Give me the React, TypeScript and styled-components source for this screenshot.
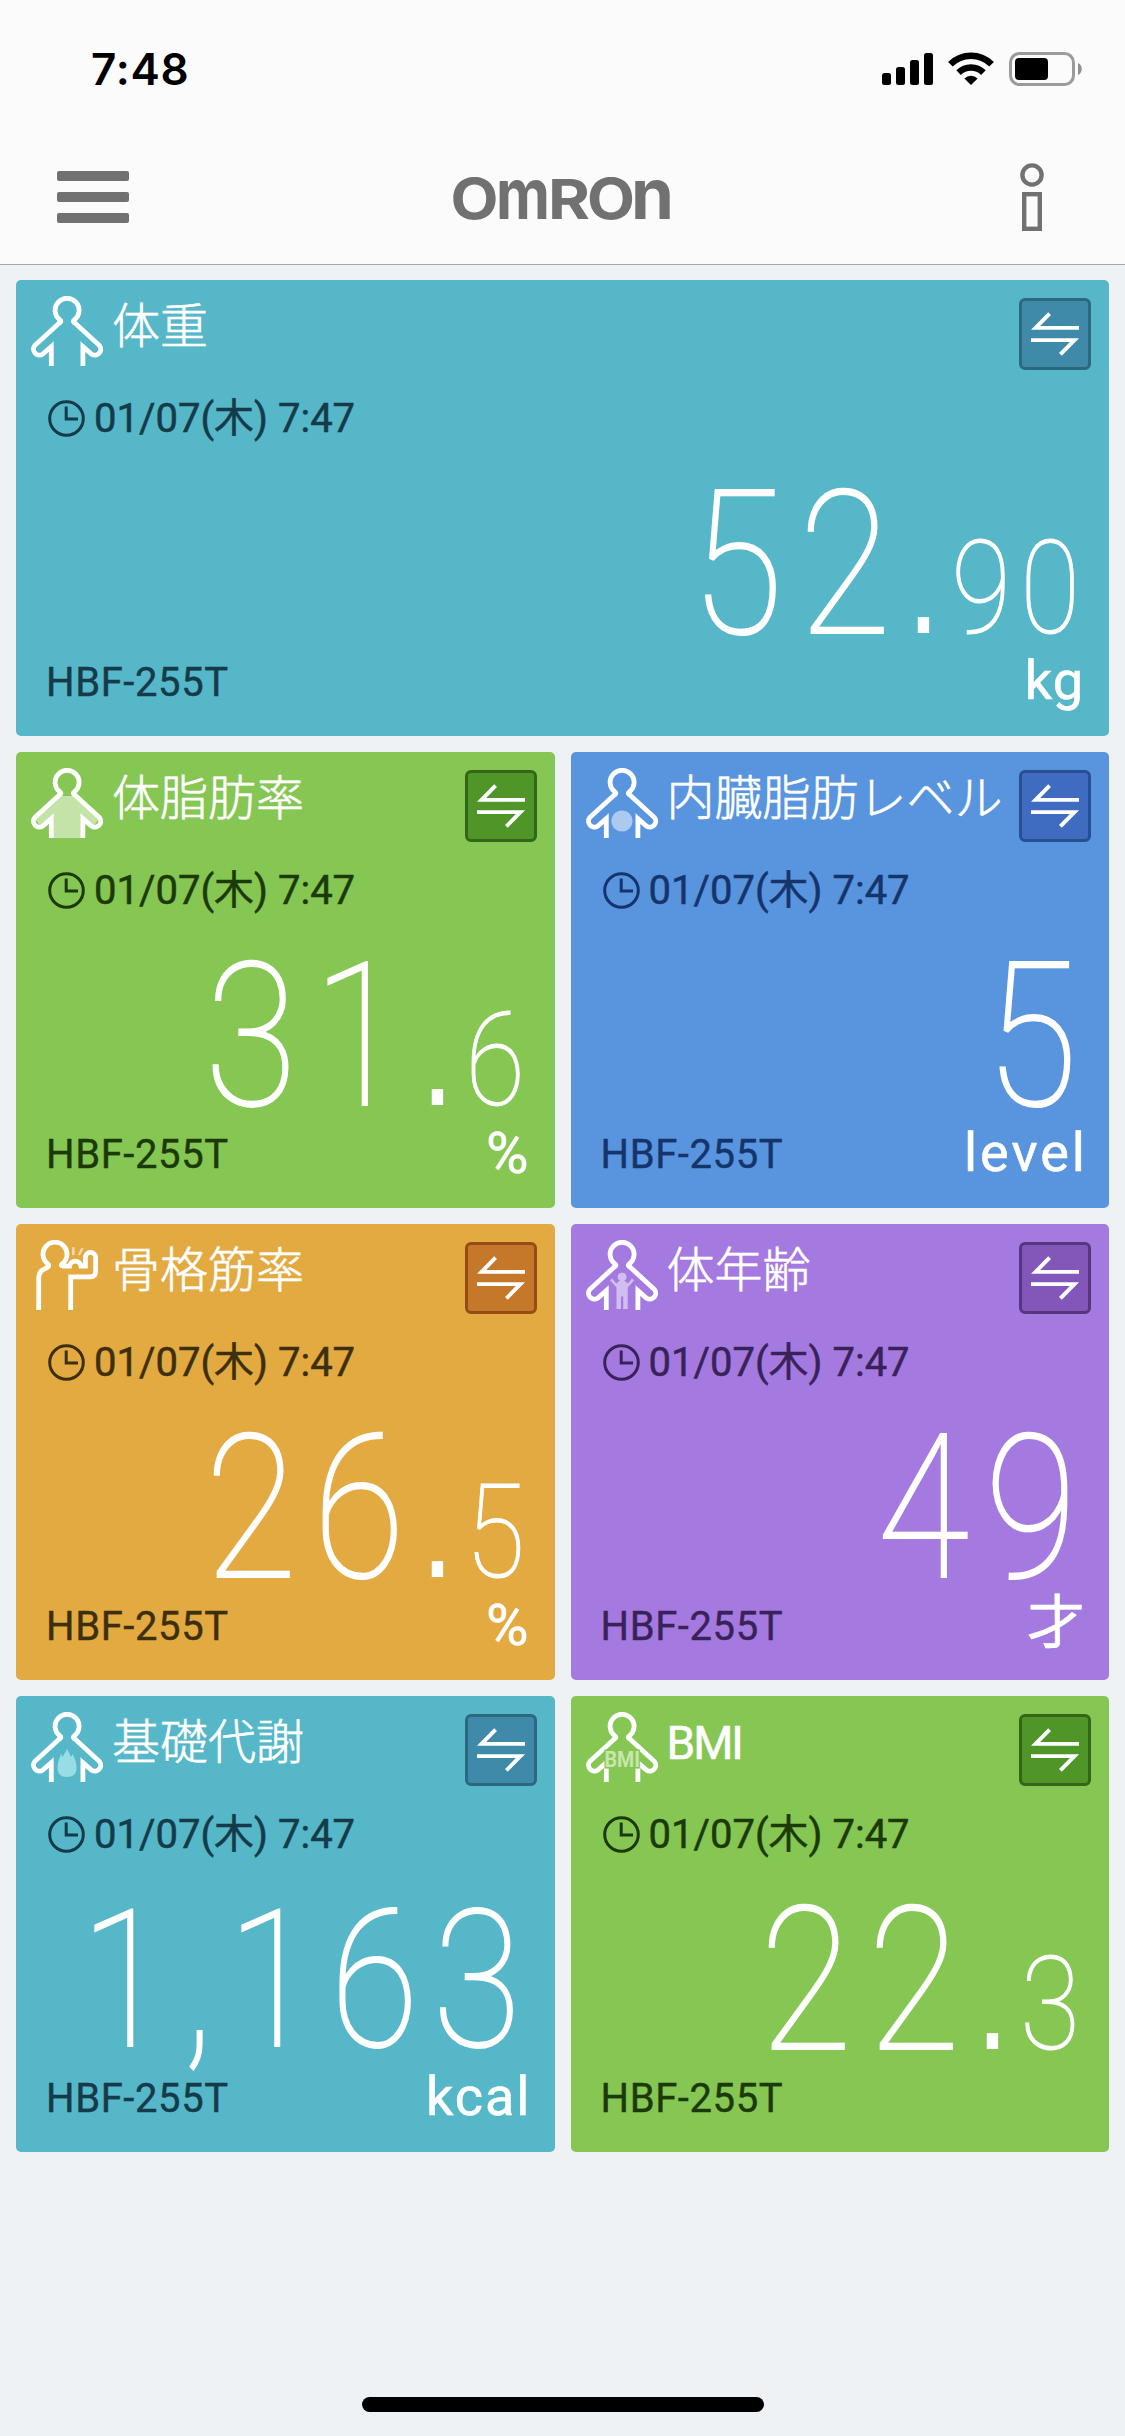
import React from "react";
import styled, { createGlobalStyle } from "styled-components";

const GlobalStyle = createGlobalStyle`
  * { box-sizing: border-box; }
  html, body { margin: 0; padding: 0; background: #eef2f5; }
  body { font-family: Roboto, "Noto Sans CJK JP", sans-serif; }
`;

interface Tone {
  base: string;
  ink: string;
  button: string;
  edge: string;
}

const tones: Record<string, Tone> = {
  teal: { base: "#55b7c8", ink: "#153a49", button: "#3f8aa8", edge: "#2e6780" },
  green: { base: "#86c653", ink: "#1b3a08", button: "#4f9528", edge: "#326717" },
  blue: { base: "#5895de", ink: "#16346c", button: "#3f6bc1", edge: "#294f93" },
  orange: { base: "#e2aa41", ink: "#3e2f0c", button: "#c57829", edge: "#934d15" },
  purple: { base: "#a57ae0", ink: "#39225a", button: "#8357b9", edge: "#57357f" },
};

const Screen = styled.div`
  width: 1125px;
  height: 2436px;
  display: flex;
  flex-direction: column;
  background: #eef2f5;
  overflow: hidden;
`;

const Header = styled.header`
  height: 265px;
  flex: none;
  background: #fbfbfc;
  border-bottom: 1px solid #a6a8ab;
`;

const StatusBar = styled.div`
  height: 138px;
  padding: 0 43px 0 91px;
  display: flex;
  align-items: center;
  justify-content: space-between;
`;

const Time = styled.span`
  font-family: Inter, sans-serif;
  font-weight: 600;
  font-size: 44px;
  line-height: 44px;
  letter-spacing: 0.8px;
  color: #000;
`;

const NavBar = styled.nav`
  height: 118px;
  padding: 0 81px 0 57px;
  display: grid;
  grid-template-columns: 72px 1fr 24px;
  align-items: center;
`;

const Burger = styled.div`
  display: flex;
  flex-direction: column;
  gap: 11px;
`;

const BurgerLine = styled.span`
  height: 10px;
  border-radius: 2px;
  background: #717171;
`;

const Logo = styled.svg`
  display: block;
  justify-self: start;
  margin-left: 324px;
  overflow: visible;
`;

const Board = styled.main`
  flex: 1;
  padding: 15px 16px 0;
  display: grid;
  grid-template-columns: 1fr 1fr;
  grid-auto-rows: 456px;
  gap: 16px;
`;

const Card = styled.section<{ $tone: Tone; $wide?: boolean }>`
  grid-column: ${(p) => (p.$wide ? "1 / -1" : "auto")};
  background: ${(p) => p.$tone.base};
  color: ${(p) => p.$tone.ink};
  border-radius: 5px;
  display: flex;
  flex-direction: column;
  min-width: 0;
`;

const CardHead = styled.div`
  height: 98px;
  padding: 16px 18px 0 15px;
  display: flex;
  align-items: flex-start;
`;

const Title = styled.h2<{ $latin?: boolean }>`
  margin: ${(p) => (p.$latin ? 6 : 1)}px 0 0 9px;
  flex: 1;
  font-family: ${(p) => (p.$latin ? "Roboto, " : "")}"Noto Sans CJK JP", sans-serif;
  font-weight: ${(p) => (p.$latin ? 400 : 300)};
  font-size: ${(p) => (p.$latin ? 46 : 48)}px;
  letter-spacing: ${(p) => (p.$latin ? "-2px" : "0")};
  line-height: 50px;
  color: #fff;
  -webkit-text-stroke: 0.6px #fff;
  white-space: nowrap;
`;

const SwapButton = styled.button<{ $tone: Tone }>`
  width: 72px;
  height: 72px;
  margin: 2px 0 0;
  padding: 0;
  flex: none;
  border: 3px solid ${(p) => p.$tone.edge};
  border-radius: 6px;
  background: ${(p) => p.$tone.button};
`;

const DateRow = styled.div`
  height: 80px;
  padding-left: 32px;
  display: flex;
  align-items: center;
  gap: 9px;
`;

const DateText = styled.span`
  padding-top: 1px;
  font-size: 40px;
  line-height: 40px;
  white-space: pre;
  -webkit-text-stroke: 0.5px currentColor;
`;

const Value = styled.div<{ $inset: number }>`
  height: 190px;
  margin-top: 7px;
  padding-right: ${(p) => p.$inset}px;
  display: flex;
  align-items: baseline;
  justify-content: flex-end;
  color: #fff;
  font-weight: 100;
`;

/* Digits are condensed and tracked out; margins cancel the unused advance. */
const Whole = styled.span<{ $small?: boolean }>`
  font-size: ${(p) => (p.$small ? 192 : 200)}px;
  line-height: 200px;
  letter-spacing: ${(p) => (p.$small ? 17 : 19)}px;
  margin-right: ${(p) => (p.$small ? -17 : -19)}px;
  transform: scaleX(0.84);
  transform-origin: right center;
  -webkit-text-stroke: 2px #fff;
`;

const Point = styled.span`
  width: 10px;
  margin: 0 34px 0 19px;
  font-family: "Liberation Sans", Arial, sans-serif;
  font-size: 148px;
  font-weight: 400;
  line-height: 150px;
  transform: scaleX(0.8);
  transform-origin: left center;
`;

const Fraction = styled.span<{ $digits: number }>`
  font-size: 130px;
  line-height: 130px;
  letter-spacing: 11px;
  margin-right: -11px;
  margin-left: ${(p) => p.$digits * -13}px;
  transform: scaleX(0.84);
  transform-origin: right center;
  -webkit-text-stroke: 1px #fff;
`;

const Foot = styled.div<{ $inset: number }>`
  margin-top: -1px;
  padding: 0 ${(p) => p.$inset}px 0 30px;
  display: flex;
  align-items: flex-start;
  justify-content: space-between;
`;

const Device = styled.span`
  margin-top: 9px;
  font-size: 40px;
  line-height: 40px;
  letter-spacing: 0.6px;
  -webkit-text-stroke: 0.4px currentColor;
`;

const Unit = styled.span<{ $size: number; $lift: number; $track: number }>`
  margin: ${(p) => -p.$lift}px ${(p) => -p.$track}px 0 0;
  font-size: ${(p) => p.$size}px;
  line-height: 54px;
  letter-spacing: ${(p) => p.$track}px;
  color: #fff;
  -webkit-text-stroke: 0.6px #fff;
`;

const HomeArea = styled.footer`
  height: 39px;
  display: flex;
  justify-content: center;
  align-items: flex-start;
`;

const HomeBar = styled.div`
  width: 402px;
  height: 15px;
  border-radius: 8px;
  background: #000;
`;

function StatusIcons() {
  return (
    <svg width="200" height="34" viewBox="0 0 200 34">
      <rect x="0" y="21" width="9" height="12" rx="2.5" />
      <rect x="14" y="15" width="9" height="18" rx="2.5" />
      <rect x="28" y="8" width="9" height="25" rx="2.5" />
      <rect x="42" y="1" width="9" height="32" rx="2.5" />
      <g fill="none" stroke="#000" strokeWidth="6.6">
        <path d="M68.4 12.3A29 29 0 0 1 109.6 12.3" />
        <path d="M76.6 20.6A17.6 17.6 0 0 1 101.4 20.6" />
      </g>
      <path d="M82.4 26.4A9.5 9.5 0 0 1 95.6 26.4L89 33Z" />
      <rect x="128.5" y="1.5" width="63" height="31" rx="9" fill="none" stroke="#9b9b9c" strokeWidth="3" />
      <rect x="133" y="6" width="33" height="22" rx="4" />
      <path d="M196 11c5 2 5 10 0 12Z" fill="#8f8f90" />
    </svg>
  );
}

function OmronLogo() {
  const fit = { lengthAdjust: "spacingAndGlyphs" as const };
  return (
    <Logo width="220" height="44" viewBox="0 0 220 44" fill="#717171" fontFamily="Inter, sans-serif">
      <text x="-2.5" y="43.5" fontSize="56.5" fontWeight="700" textLength="48" {...fit}>O</text>
      <text x="43" y="43.5" fontSize="70" fontWeight="700" textLength="54" {...fit}>m</text>
      <text x="95" y="43.5" fontSize="55.5" fontWeight="700" textLength="42" {...fit}>R</text>
      <text x="134" y="43.5" fontSize="56.5" fontWeight="700" textLength="48" {...fit}>O</text>
      <text x="178" y="43.5" fontSize="70" fontWeight="700" textLength="43" {...fit}>n</text>
    </Logo>
  );
}

function InfoIcon() {
  return (
    <svg width="24" height="68" viewBox="0 0 24 68" fill="none" stroke="#717171" strokeWidth="4.4">
      <circle cx="12" cy="12" r="9.6" />
      <rect x="4.2" y="31.2" width="15.6" height="34.6" />
    </svg>
  );
}

type IconKind = "plain" | "fat" | "visceral" | "muscle" | "age" | "flame" | "bmi";

const BODY =
  "M20.3 70V50.6L11.5 58.2A5.9 5.9 0 0 1 3.7 49.6L28 27.2Q31.6 25.6 28.5 23.6A12 12 0 1 1 43.7 23.6Q40.6 25.6 44.2 27.2L68.5 49.6A5.9 5.9 0 0 1 60.7 58.2L51.9 50.6V70";

function BodyIcon({ kind, tone }: { kind: IconKind; tone: Tone }) {
  if (kind === "muscle") {
    return (
      <svg width="72" height="70" viewBox="0 0 72 70" fill="none" stroke="#fff" strokeWidth="4.8">
        <path d="M7.7 70V37.5Q7.7 32.5 11.5 30L16.4 27.4Q19 25.6 16.6 23.6A12 12 0 1 1 31.4 23.6Q29 25.6 32 26.2H38.6C39.6 19.4 49 19.4 50 26.2H54.4V17.5A5.1 5.1 0 0 1 64.6 17.5V31.5Q64.6 36.8 59.3 36.8H39.7V70" />
        <path d="M42.3 7.2V15M51.6 8L47.8 15" strokeWidth="2.4" opacity="0.6" />
      </svg>
    );
  }
  return (
    <svg width="72" height="70" viewBox="0 0 72 70" fill="none">
      {kind === "fat" && (
        <path d="M29 28H43.2L68 51 62 59 50 49V70H22V49L10 59 4 51Z" fill="#fff" opacity="0.5" />
      )}
      <path d={BODY} stroke="#fff" strokeWidth="4.8" />
      {kind === "visceral" && <circle cx="36" cy="53" r="10.6" fill="#fff" opacity="0.5" />}
      {kind === "flame" && (
        <path
          d="M36 36.5C37 40 39.5 42 40 45L41.8 42C44 47 45.6 51 45.6 56C45.6 62 42 65 36 65S26.5 62 26.5 56C26.5 51 28 47 30.2 42L32 45C32.5 42 35 40 36 36.5Z"
          fill="#98dce4"
        />
      )}
      {kind === "age" && (
        <path
          d="M36.1 32.7A4.2 4.2 0 0 1 38.3 40.6L42 43.4 45.9 38.6 48.2 40.3 41.7 47.4V69H37.2V56.5H35V69H30.5V47.4L24 40.3 26.3 38.6 30.2 43.4 33.9 40.6A4.2 4.2 0 0 1 36.1 32.7Z"
          fill="#fff"
          opacity="0.5"
        />
      )}
      {kind === "bmi" && (
        <text
          x="18.5"
          y="54.6"
          fontFamily="Roboto, sans-serif"
          fontWeight="700"
          fontSize="22.5"
          textLength="35.5"
          lengthAdjust="spacingAndGlyphs"
          fill="#c8e6ad"
          stroke={tone.base}
          strokeWidth="3"
          paintOrder="stroke"
        >
          BMI
        </text>
      )}
    </svg>
  );
}

function SwapIcon() {
  return (
    <svg width="66" height="66" viewBox="3 3 66 66" fill="none" stroke="#fff" strokeWidth="3.9" display="block">
      <path d="M60 29.9H16.6L30.6 15.6" />
      <path d="M12 42.1H55.4L41.4 56.4" />
    </svg>
  );
}

function ClockIcon() {
  return (
    <svg width="37" height="37" viewBox="0 0 37 37" fill="none" stroke="currentColor" strokeWidth="3">
      <circle cx="18.5" cy="18.5" r="16.8" />
      <path d="M18.2 6.5V18.9H30" />
    </svg>
  );
}

interface UnitSpec {
  text: string;
  size: number;
  lift: number;
  track: number;
  inset: number;
}

const units: Record<string, UnitSpec> = {
  kg: { text: "kg", size: 54, lift: 0, track: 1, inset: 26 },
  percent: { text: "%", size: 58, lift: 0, track: 0, inset: 26 },
  level: { text: "level", size: 54, lift: 0, track: 3, inset: 24 },
  age: { text: "才", size: 58, lift: 2, track: 2, inset: 24 },
  kcal: { text: "kcal", size: 54, lift: 0, track: 2, inset: 25 },
};

interface Metric {
  title: string;
  latin?: boolean;
  icon: IconKind;
  tone: Tone;
  whole: string;
  fraction?: string;
  unit?: UnitSpec;
  wide?: boolean;
  inset: number;
}

const metrics: Metric[] = [
  { title: "体重", icon: "plain", tone: tones.teal, whole: "52", fraction: "90", unit: units.kg, wide: true, inset: 31 },
  { title: "体脂肪率", icon: "fat", tone: tones.green, whole: "31", fraction: "6", unit: units.percent, inset: 31 },
  { title: "内臓脂肪レベル", icon: "visceral", tone: tones.blue, whole: "5", unit: units.level, inset: 35 },
  { title: "骨格筋率", icon: "muscle", tone: tones.orange, whole: "26", fraction: "5", unit: units.percent, inset: 31 },
  { title: "体年齢", icon: "age", tone: tones.purple, whole: "49", unit: units.age, inset: 35 },
  { title: "基礎代謝", icon: "flame", tone: tones.teal, whole: "1,163", unit: units.kcal, inset: 36 },
  { title: "BMI", latin: true, icon: "bmi", tone: tones.green, whole: "22", fraction: "3", inset: 31 },
];

function MetricCard({ m }: { m: Metric }) {
  return (
    <Card $tone={m.tone} $wide={m.wide}>
      <CardHead>
        <BodyIcon kind={m.icon} tone={m.tone} />
        <Title $latin={m.latin}>{m.title}</Title>
        <SwapButton $tone={m.tone} aria-label={m.title}>
          <SwapIcon />
        </SwapButton>
      </CardHead>
      <DateRow>
        <ClockIcon />
        <DateText>01/07(木) 7:47</DateText>
      </DateRow>
      <Value $inset={m.inset}>
        <Whole $small={m.whole.length > 3}>{m.whole}</Whole>
        {m.fraction && <Point>.</Point>}
        {m.fraction && <Fraction $digits={m.fraction.length}>{m.fraction}</Fraction>}
      </Value>
      <Foot $inset={m.unit ? m.unit.inset : 0}>
        <Device>HBF-255T</Device>
        {m.unit && (
          <Unit $size={m.unit.size} $lift={m.unit.lift} $track={m.unit.track}>
            {m.unit.text}
          </Unit>
        )}
      </Foot>
    </Card>
  );
}

export default function App() {
  return (
    <Screen>
      <GlobalStyle />
      <Header>
        <StatusBar>
          <Time>7:48</Time>
          <StatusIcons />
        </StatusBar>
        <NavBar>
          <Burger>
            <BurgerLine />
            <BurgerLine />
            <BurgerLine />
          </Burger>
          <OmronLogo />
          <InfoIcon />
        </NavBar>
      </Header>
      <Board>
        {metrics.map((m) => (
          <MetricCard key={m.title} m={m} />
        ))}
      </Board>
      <HomeArea>
        <HomeBar />
      </HomeArea>
    </Screen>
  );
}
